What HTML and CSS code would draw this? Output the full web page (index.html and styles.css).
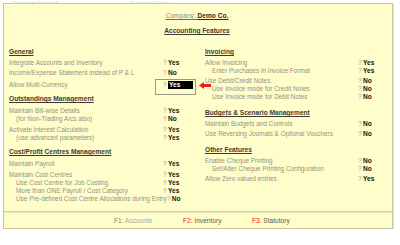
FILE: index.html
```html
<!DOCTYPE html>
<html lang="en">
<head>
    <meta charset="UTF-8">
    <title>Accounting Features</title>
    <link rel="stylesheet" href="styles.css">
</head>
<body>

  <div class="top-strip">
    <span class="top-period">Current Period</span>
    <span class="top-date">Current Date</span>
  </div>

  <div class="panel">
    <div class="panel-body">
      <div class="title"><span class="company">Company: <b>Demo Co.</b></span></div>
      <div class="title title-2"><b>Accounting Features</b></div>

      <div class="columns">
        <!-- left column -->
        <div class="col col-left">
          <div class="section">
            <h2>General</h2>
            <div class="group">
              <div class="row"><span class="label">Integrate Accounts and Inventory</span><span class="q">?</span><span class="val">Yes</span></div>
            </div>
            <div class="group">
              <div class="row"><span class="label">Income/Expense Statement instead of P &amp; L</span><span class="q">?</span><span class="val">No</span></div>
            </div>
            <div class="group group-edit">
              <div class="row row-edit">
                <span class="label">Allow Multi-Currency</span><span class="q">?</span><span class="val val-edit">Yes</span>
                <span class="edit-box"></span>
                <svg class="arrow" width="12" height="7" viewBox="0 0 12 7"><path d="M0 3.5 L5 0 L5 2 L12 2 L12 5 L5 5 L5 7 Z" fill="#e8201c"/></svg>
              </div>
            </div>
          </div>

          <div class="section sec-outstanding">
            <h2>Outstandings Management</h2>
            <div class="group">
              <div class="row"><span class="label">Maintain Bill-wise Details</span><span class="q">?</span><span class="val">Yes</span></div>
              <div class="row sub"><span class="label">(for Non-Trading A/cs also)</span><span class="q">?</span><span class="val">No</span></div>
            </div>
            <div class="group">
              <div class="row"><span class="label">Activate Interest Calculation</span><span class="q">?</span><span class="val">Yes</span></div>
              <div class="row sub"><span class="label">(use advanced parameters)</span><span class="q">?</span><span class="val">Yes</span></div>
            </div>
          </div>

          <div class="section sec-cost">
            <h2>Cost/Profit Centres Management</h2>
            <div class="group">
              <div class="row"><span class="label">Maintain Payroll</span><span class="q">?</span><span class="val">Yes</span></div>
            </div>
            <div class="group">
              <div class="row"><span class="label">Maintain Cost Centres</span><span class="q">?</span><span class="val">Yes</span></div>
              <div class="row sub"><span class="label">Use Cost Centre for Job Costing</span><span class="q">?</span><span class="val">Yes</span></div>
              <div class="row sub"><span class="label">More than ONE Payroll / Cost Category</span><span class="q">?</span><span class="val">Yes</span></div>
              <div class="row sub"><span class="label">Use Pre-defined Cost Centre Allocations during Entry</span><span class="q">?</span><span class="val">No</span></div>
            </div>
          </div>
        </div>

        <!-- right column -->
        <div class="col">
          <div class="section">
            <h2>Invoicing</h2>
            <div class="group">
              <div class="row"><span class="label">Allow Invoicing</span><span class="q">?</span><span class="val">Yes</span></div>
              <div class="row sub"><span class="label">Enter Purchases in Invoice Format</span><span class="q">?</span><span class="val">Yes</span></div>
            </div>
            <div class="group">
              <div class="row"><span class="label">Use Debit/Credit Notes</span><span class="q">?</span><span class="val">No</span></div>
              <div class="row sub"><span class="label">Use Invoice mode for Credit Notes</span><span class="q">?</span><span class="val">No</span></div>
              <div class="row sub"><span class="label">Use Invoice mode for Debit Notes</span><span class="q">?</span><span class="val">No</span></div>
            </div>
          </div>

          <div class="section">
            <h2>Budgets &amp; Scenario Management</h2>
            <div class="group">
              <div class="row"><span class="label">Maintain Budgets and Controls</span><span class="q">?</span><span class="val">No</span></div>
            </div>
            <div class="group">
              <div class="row"><span class="label">Use Reversing Journals &amp; Optional Vouchers</span><span class="q">?</span><span class="val">No</span></div>
            </div>
          </div>

          <div class="section">
            <h2>Other Features</h2>
            <div class="group">
              <div class="row"><span class="label">Enable Cheque Printing</span><span class="q">?</span><span class="val">No</span></div>
              <div class="row sub"><span class="label">Set/Alter Cheque Printing Configuration</span><span class="q">?</span><span class="val">No</span></div>
            </div>
            <div class="group">
              <div class="row"><span class="label">Allow Zero valued entries</span><span class="q">?</span><span class="val">Yes</span></div>
            </div>
          </div>
        </div>
      </div>
    </div>

    <div class="footer">
      <span class="fkey fkey-off"><b>F1:</b> Accounts</span>
      <span class="fkey"><b>F2:</b> Inventory</span>
      <span class="fkey"><b>F3:</b> Statutory</span>
    </div>
  </div>

</body>
</html>
```

FILE: styles.css
```css
body {
    font-family: "Liberation Sans", Arial, sans-serif;
    font-size: 6.6px;
    background-color: #ffffff;
    margin: 0;
    padding: 0;
    color: #929284;
}

.top-strip {
    height: 3px;
    overflow: hidden;
    color: #d4d4cc;
    font-size: 7px;
}

.top-strip span {
    display: inline-block;
    margin-top: -5px;
}

.top-period {
    margin-left: 12px;
}

.top-date {
    margin-left: 70px;
}

.panel {
    margin-left: 3px;
    width: 388px;
    height: 224px;
    background-color: #fffecb;
    border: 1px solid #c9c6a4;
    box-shadow: 1px 1px 0 #e2e2dc;
    display: flex;
    flex-direction: column;
}

.panel-body {
    flex: 1;
    padding: 8px 7px 0 5px;
}

.title {
    text-align: center;
    line-height: 8px;
    color: #3c3c34;
}

.title b {
    text-decoration: underline;
}

.company {
    color: #8e8e80;
    text-decoration: underline;
    text-decoration-color: #6a6a60;
}

.company b {
    color: #2a2a24;
}

.title-2 {
    margin-top: 7px;
}

.columns {
    display: grid;
    grid-template-columns: 181px 180px;
    column-gap: 15px;
    margin-top: 12px;
}

.section + .section {
    margin-top: 7px;
}

.col-left .section + .section {
    margin-top: 5px;
}

.col-left .sec-outstanding .group,
.col-left .sec-cost .group {
    margin-top: 3px;
}

h2 {
    margin: 0;
    font-size: 6.6px;
    line-height: 10px;
    font-weight: bold;
    color: #3c3c34;
    text-decoration: underline;
}

.group {
    margin-top: 2px;
}

.group-edit {
    margin-top: 4px;
}

.row {
    display: grid;
    grid-template-columns: 1fr 5px 22px;
    height: 8px;
    line-height: 8px;
    white-space: nowrap;
}

.label {
    font-size: 6.4px;
}

.sub .label {
    padding-left: 7px;
}

.q {
    color: #9a9a8c;
}

.val {
    font-weight: bold;
    color: #161612;
}

.row-edit {
    position: relative;
}

.val-edit {
    background-color: #000000;
    color: #ffffff;
    margin-right: -3px;
    padding-left: 1px;
}

.edit-box {
    position: absolute;
    left: 146px;
    top: -2px;
    width: 39px;
    height: 14px;
    border: 1px solid #9a9888;
}

.arrow {
    position: absolute;
    left: 190px;
    top: 1px;
}

.footer {
    height: 16px;
    border-top: 1px solid #d3cfa2;
    box-shadow: inset 0 1px 0 #ecebc0;
    display: flex;
    align-items: center;
    padding-left: 110px;
    color: #5a5a50;
}

.fkey {
    width: 69px;
}

.fkey b {
    font-weight: normal;
    color: #e8201c;
}

.fkey-off {
    color: #a6a698;
}

.fkey-off b {
    color: #7c7c70;
}
```
